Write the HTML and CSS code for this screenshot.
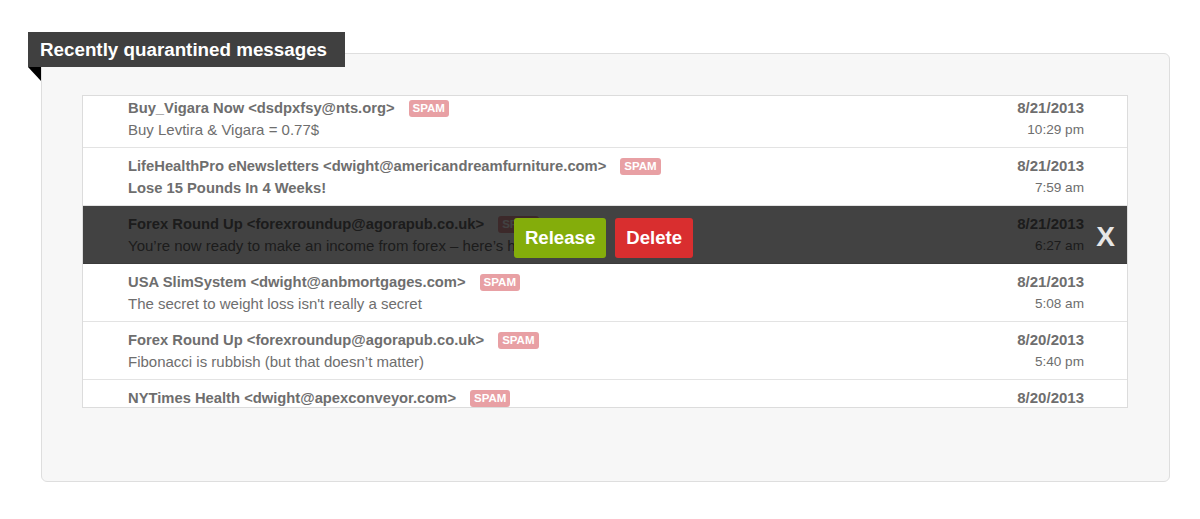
FILE: index.html
```html
<!DOCTYPE html>
<html>
<head>
<meta charset="utf-8">
<link rel="stylesheet" href="styles.css">
</head>
<body>
<div class="panel">
  <div class="tab">Recently quarantined messages</div>
  <div class="list">
    <div class="list-inner">
      <div class="row">
        <div class="msg">
          <div class="from">Buy_Vigara Now &lt;dsdpxfsy@nts.org&gt;<span class="badge">SPAM</span></div>
          <div class="subject">Buy Levtira &amp; Vigara = 0.77$</div>
        </div>
        <div class="when"><div class="date">8/21/2013</div><div class="time">10:29 pm</div></div>
      </div>
      <div class="row">
        <div class="msg">
          <div class="from">LifeHealthPro eNewsletters &lt;dwight@americandreamfurniture.com&gt;<span class="badge">SPAM</span></div>
          <div class="subject unread">Lose 15 Pounds In 4 Weeks!</div>
        </div>
        <div class="when"><div class="date">8/21/2013</div><div class="time">7:59 am</div></div>
      </div>
      <div class="row active">
        <div class="msg">
          <div class="from">Forex Round Up &lt;forexroundup@agorapub.co.uk&gt;<span class="badge">SPAM</span></div>
          <div class="subject">You’re now ready to make an income from forex – here’s how</div>
        </div>
        <div class="when"><div class="date">8/21/2013</div><div class="time">6:27 am</div></div>
        <div class="overlay">
          <button class="btn release">Release</button>
          <button class="btn delete">Delete</button>
          <span class="close">X</span>
        </div>
      </div>
      <div class="row">
        <div class="msg">
          <div class="from">USA SlimSystem &lt;dwight@anbmortgages.com&gt;<span class="badge">SPAM</span></div>
          <div class="subject">The secret to weight loss isn't really a secret</div>
        </div>
        <div class="when"><div class="date">8/21/2013</div><div class="time">5:08 am</div></div>
      </div>
      <div class="row">
        <div class="msg">
          <div class="from">Forex Round Up &lt;forexroundup@agorapub.co.uk&gt;<span class="badge">SPAM</span></div>
          <div class="subject">Fibonacci is rubbish (but that doesn’t matter)</div>
        </div>
        <div class="when"><div class="date">8/20/2013</div><div class="time">5:40 pm</div></div>
      </div>
      <div class="row">
        <div class="msg">
          <div class="from">NYTimes Health &lt;dwight@apexconveyor.com&gt;<span class="badge">SPAM</span></div>
          <div class="subject">Your weekly health news digest</div>
        </div>
        <div class="when"><div class="date">8/20/2013</div><div class="time">4:12 pm</div></div>
      </div>
    </div>
  </div>
</div>
</body>
</html>
```

FILE: styles.css
```css
html, body {
  margin: 0;
  padding: 0;
  background: #ffffff;
  font-family: "Liberation Sans", Arial, sans-serif;
}

.panel {
  position: relative;
  box-sizing: border-box;
  width: 1129px;
  height: 429px;
  margin: 53px 0 0 41px;
  padding: 41px 41px 0 40px;
  background: #f7f7f7;
  border: 1px solid #dedede;
  border-radius: 6px;
}

.tab {
  position: absolute;
  left: -14px;
  top: -22px;
  height: 35px;
  line-height: 35px;
  padding: 0 18px 0 12px;
  background: #404040;
  color: #ffffff;
  font-weight: bold;
  font-size: 18.8px;
  white-space: nowrap;
}

.tab::after {
  content: "";
  position: absolute;
  left: 0;
  top: 35px;
  width: 0;
  height: 0;
  border-top: 14px solid #000000;
  border-left: 13px solid transparent;
}

.list {
  box-sizing: border-box;
  height: 313px;
  background: #ffffff;
  border: 1px solid #dcdcdc;
  overflow: hidden;
}

.list-inner {
  margin-top: -6px;
}

.row {
  position: relative;
  display: flex;
  justify-content: space-between;
  padding: 7px 43px 6px 45px;
  border-bottom: 1px solid #e3e3e3;
  color: #6e6e6e;
}

.from {
  font-weight: bold;
  font-size: 14.75px;
  line-height: 22px;
  white-space: nowrap;
}

.subject {
  font-size: 15px;
  line-height: 22px;
  white-space: nowrap;
}

.subject.unread {
  font-weight: bold;
  font-size: 14.75px;
}

.badge {
  display: inline-block;
  vertical-align: 1px;
  margin-left: 14px;
  padding: 0 4px;
  height: 17px;
  line-height: 17px;
  border-radius: 3px;
  background: #e8a0a4;
  color: #ffffff;
  font-size: 11.5px;
  font-weight: bold;
}

.when {
  text-align: right;
}

.date {
  font-weight: bold;
  font-size: 15px;
  line-height: 22px;
}

.time {
  font-size: 13.6px;
  line-height: 22px;
}

.overlay {
  position: absolute;
  left: 0;
  right: 0;
  top: 0;
  bottom: -1px;
  box-sizing: border-box;
  display: flex;
  align-items: center;
  justify-content: center;
  gap: 9px;
  padding: 5px 3px 0 0;
  background: rgba(0, 0, 0, 0.74);
}

.btn {
  height: 40px;
  padding: 0 11px;
  border: none;
  border-radius: 3px;
  color: #ffffff;
  font-family: "Liberation Sans", Arial, sans-serif;
  font-weight: bold;
  font-size: 18.6px;
}

.release {
  background: #84ad0b;
}

.delete {
  background: #d92e2f;
}

.close {
  position: absolute;
  right: 12px;
  top: 50%;
  transform: translateY(-42%);
  color: #e6e6e6;
  font-weight: bold;
  font-size: 28px;
  line-height: 1;
}
```
